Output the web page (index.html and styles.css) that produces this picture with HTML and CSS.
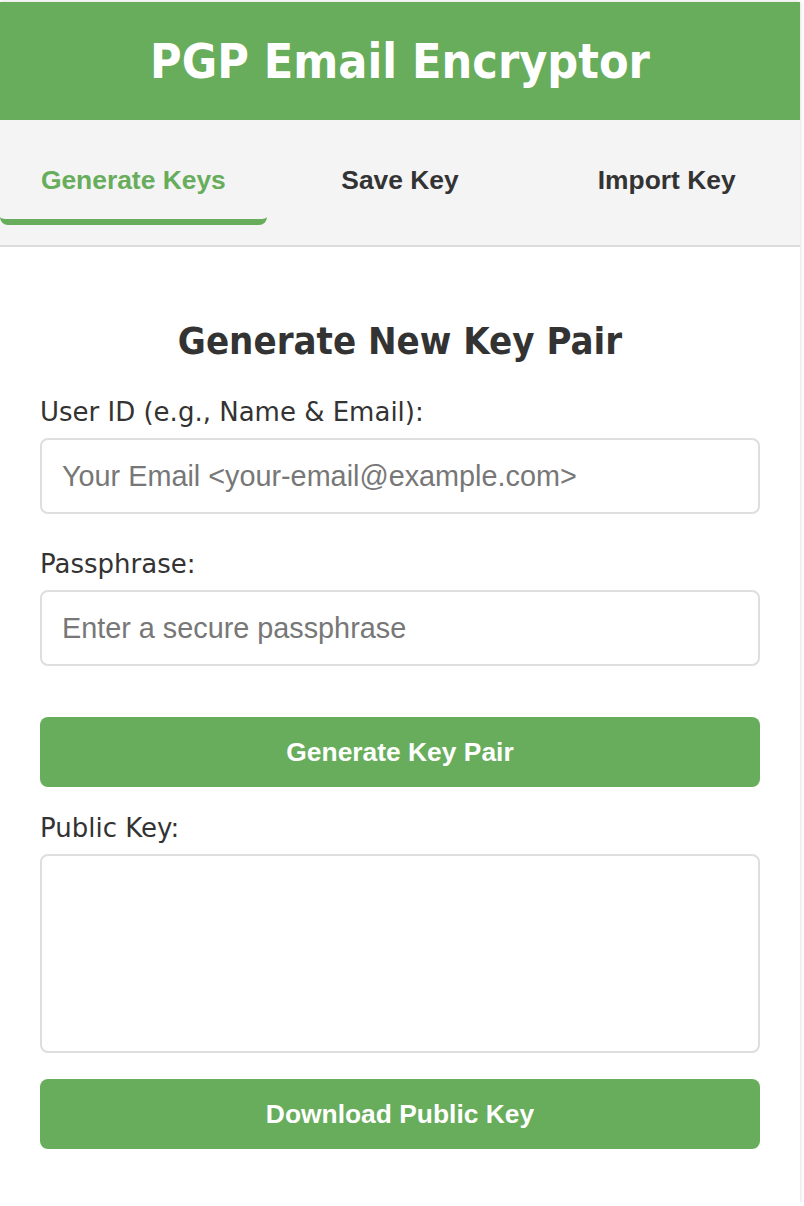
FILE: index.html
```html
<!DOCTYPE html>
<html lang="en">
<head>
<meta charset="utf-8">
<title>PGP Email Encryptor</title>
<link rel="stylesheet" href="styles.css">
</head>
<body>
<div class="app">
  <header class="app-header">
    <h1 class="app-title">PGP Email Encryptor</h1>
  </header>
  <nav class="tabs">
    <button class="tab tab-active">Generate Keys</button>
    <button class="tab">Save Key</button>
    <button class="tab">Import Key</button>
  </nav>
  <main class="panel">
    <h2 class="panel-title">Generate New Key Pair</h2>
    <div class="field">
      <label class="field-label" for="uid">User ID (e.g., Name &amp; Email):</label>
      <input class="field-input" id="uid" type="text" placeholder="Your Email &lt;your-email@example.com&gt;">
    </div>
    <div class="field">
      <label class="field-label" for="pass">Passphrase:</label>
      <input class="field-input" id="pass" type="password" placeholder="Enter a secure passphrase">
    </div>
    <button class="action-btn action-generate">Generate Key Pair</button>
    <div class="field field-key">
      <label class="field-label" for="pub">Public Key:</label>
      <textarea class="field-area" id="pub"></textarea>
    </div>
    <button class="action-btn">Download Public Key</button>
  </main>
</div>
</body>
</html>
```

FILE: styles.css
```css
* { box-sizing: border-box; }
html, body { margin: 0; padding: 0; background: #fff; }
body { font-family: "DejaVu Sans", sans-serif; color: #333; }

.app {
  width: 800px;
  margin-top: 2px;
  background: #fff;
  box-shadow: 0 0 4px rgba(0,0,0,0.18);
  padding-bottom: 54px;
}

.app-header {
  background: #68ad5c;
  height: 118px;
  display: flex;
  align-items: center;
  justify-content: center;
}
.app-title {
  margin: 0;
  color: #fff;
  font-family: "DejaVu Sans Condensed", "DejaVu Sans", sans-serif;
  font-weight: bold;
  font-size: 48px;
  line-height: 1;
}

.tabs {
  display: flex;
  background: #f4f4f4;
  border-bottom: 2px solid #dcdcdc;
  padding: 15px 0 20px;
}
.tab {
  flex: 1;
  height: 90px;
  border: none;
  border-bottom: 6px solid transparent;
  border-radius: 0 0 8px 8px;
  background: transparent;
  font-family: "Liberation Sans", Arial, sans-serif;
  font-weight: bold;
  font-size: 26.4px;
  color: #333;
  padding: 6px 0 0;
}
.tab-active {
  color: #68ad5c;
  border-bottom-color: #68ad5c;
}

.panel { padding: 0 40px; }

.panel-title {
  margin: 72px 0 34px;
  text-align: center;
  font-family: "DejaVu Sans Condensed", "DejaVu Sans", sans-serif;
  font-size: 38px;
  font-weight: bold;
  line-height: 44px;
  color: #333;
}

.field { margin-bottom: 35px; }
.field-key { margin-top: 26px; margin-bottom: 0; }
.field-label {
  display: block;
  font-family: "DejaVu Sans", sans-serif;
  font-size: 26px;
  line-height: 31px;
  margin-bottom: 10px;
  color: #333;
}
.field-input, .field-area {
  display: block;
  width: 100%;
  border: 2px solid #dedede;
  border-radius: 8px;
  background: #fff;
  font-family: "Liberation Sans", Arial, sans-serif;
  font-size: 28.8px;
  color: #333;
  outline: none;
}
.field-input { height: 76px; padding: 0 20px; }
.field-input::placeholder { color: #777; }
.field-area { height: 199px; resize: none; padding: 12px 20px; }

.action-btn {
  display: block;
  width: 100%;
  height: 70px;
  border: none;
  border-radius: 8px;
  background: #68ad5c;
  color: #fff;
  font-family: "Liberation Sans", Arial, sans-serif;
  font-weight: bold;
  font-size: 26.4px;
  margin-top: 26px;
}
.action-generate { margin-top: 51px; }
```
